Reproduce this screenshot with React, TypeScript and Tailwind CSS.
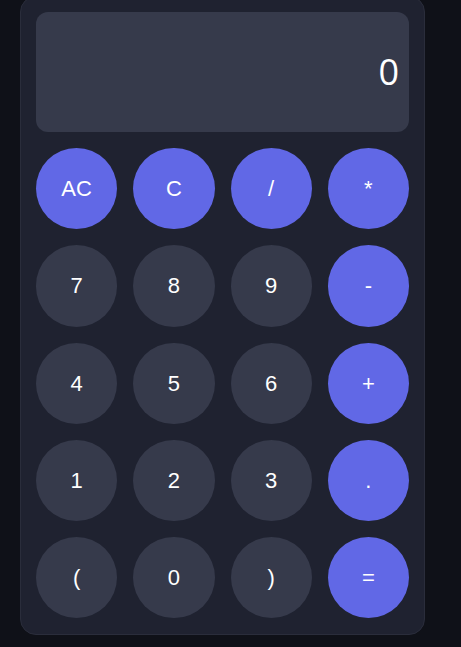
import React from "react";

const keys: { label: string; accent?: boolean }[] = [
  { label: "AC", accent: true },
  { label: "C", accent: true },
  { label: "/", accent: true },
  { label: "*", accent: true },
  { label: "7" },
  { label: "8" },
  { label: "9" },
  { label: "-", accent: true },
  { label: "4" },
  { label: "5" },
  { label: "6" },
  { label: "+", accent: true },
  { label: "1" },
  { label: "2" },
  { label: "3" },
  { label: ".", accent: true },
  { label: "(" },
  { label: "0" },
  { label: ")" },
  { label: "=", accent: true },
];

export default function App() {
  return (
    <div className="w-[461px] h-[647px] overflow-hidden bg-[#0f1118]">
      <div className="ml-[20px] mt-[-4px] w-[405px] rounded-2xl border border-[#2a2d3b] bg-[#1f2230] px-[15px] pt-[15px] pb-4">
        <div className="flex h-[120px] items-center justify-end rounded-xl bg-[#363a4b] px-[10px] text-[36px] text-white [font-family:'Open_Sans',sans-serif]">
          0
        </div>
        <div className="mt-4 grid grid-cols-4 gap-4">
          {keys.map((k) => (
            <button
              key={k.label}
              className={
                "flex aspect-square items-center justify-center rounded-full text-[22px] text-white [font-family:'Liberation_Sans',Arial,sans-serif] " +
                (k.accent ? "bg-[#6168e6]" : "bg-[#363a4b]")
              }
            >
              {k.label}
            </button>
          ))}
        </div>
      </div>
    </div>
  );
}
